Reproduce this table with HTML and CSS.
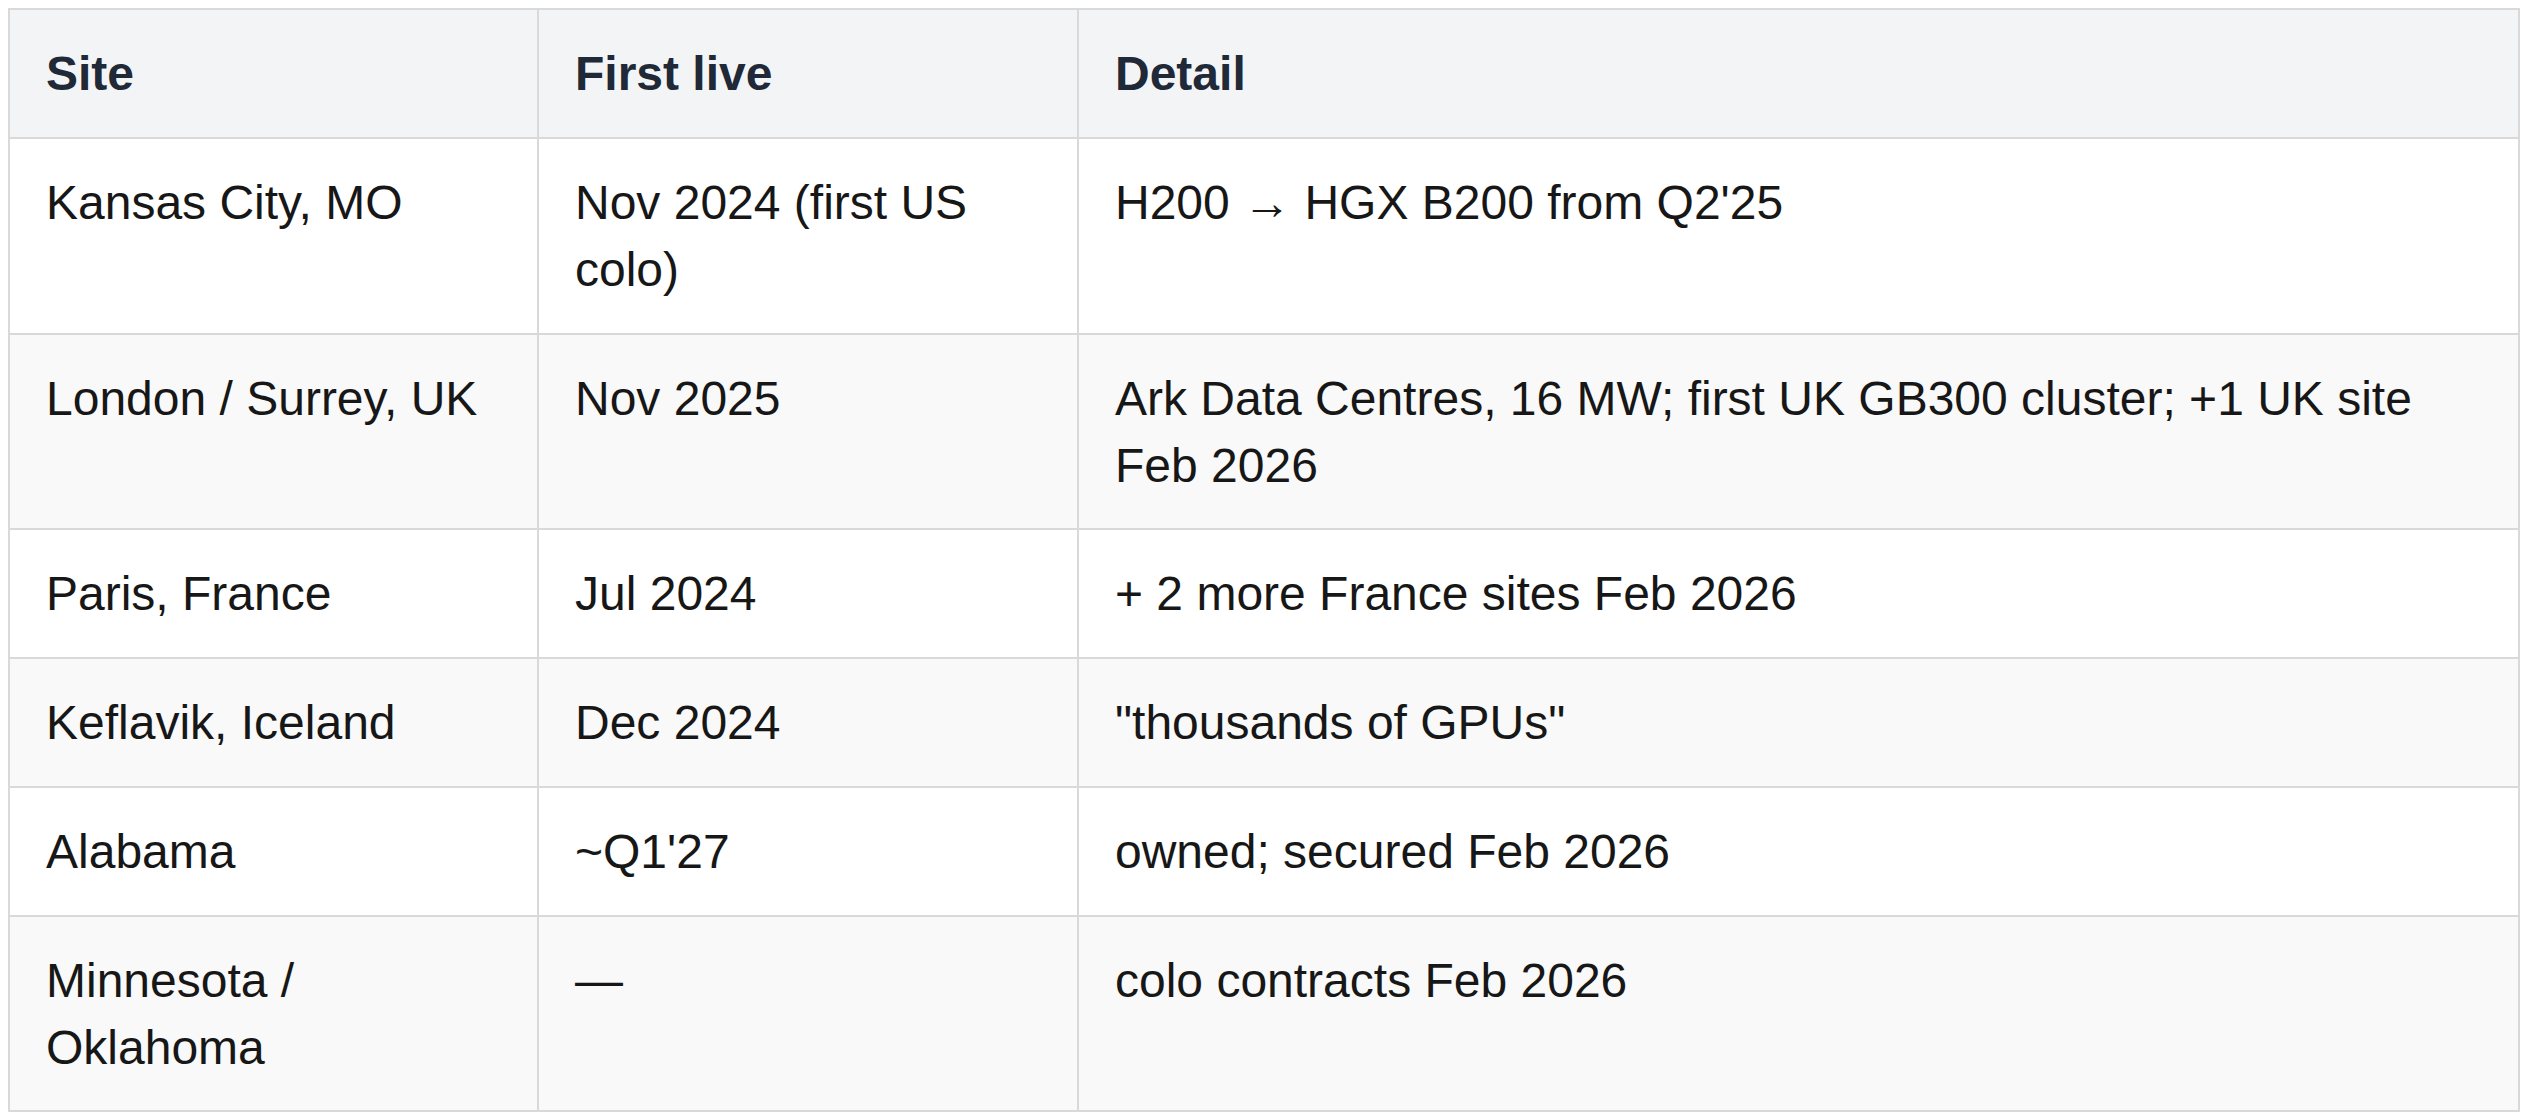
FILE: index.html
```html
<!DOCTYPE html>
<html lang="en">
<head>
<meta charset="utf-8">
<title>Sites</title>
<link rel="stylesheet" href="styles.css">
</head>
<body>
<table class="sites">
  <colgroup>
    <col class="col-site">
    <col class="col-live">
    <col class="col-detail">
  </colgroup>
  <thead>
    <tr>
      <th>Site</th>
      <th>First live</th>
      <th>Detail</th>
    </tr>
  </thead>
  <tbody>
    <tr>
      <td>Kansas City, MO</td>
      <td>Nov 2024 (first US colo)</td>
      <td>H200 → HGX B200 from Q2'25</td>
    </tr>
    <tr>
      <td>London / Surrey, UK</td>
      <td>Nov 2025</td>
      <td>Ark Data Centres, 16 MW; first UK GB300 cluster; +1 UK site Feb 2026</td>
    </tr>
    <tr>
      <td>Paris, France</td>
      <td>Jul 2024</td>
      <td>+ 2 more France sites Feb 2026</td>
    </tr>
    <tr>
      <td>Keflavik, Iceland</td>
      <td>Dec 2024</td>
      <td>"thousands of GPUs"</td>
    </tr>
    <tr>
      <td>Alabama</td>
      <td>~Q1'27</td>
      <td>owned; secured Feb 2026</td>
    </tr>
    <tr>
      <td>Minnesota / Oklahoma</td>
      <td>—</td>
      <td>colo contracts Feb 2026</td>
    </tr>
  </tbody>
</table>
</body>
</html>
```
FILE: styles.css
```css
html, body {
  background: #ffffff;
}

body {
  margin: 8px;
  font-family: "Liberation Sans", Arial, sans-serif;
  font-size: 48px;
  line-height: 1.4;
  color: #171717;
}

.sites {
  width: 2512px;
  border-collapse: collapse;
  table-layout: fixed;
  border: 2px solid #d9d9d9;
}

.col-site {
  width: 529px;
}

.col-live {
  width: 540px;
}

.sites th,
.sites td {
  border: 2px solid #d9d9d9;
  padding: 30px 36px 29.5px 36px;
  text-align: left;
  vertical-align: top;
}

.sites th {
  background: #f3f4f6;
  color: #1f2937;
  font-weight: 700;
}

.sites tbody tr:nth-child(even) td {
  background: #f9f9f9;
}
```
